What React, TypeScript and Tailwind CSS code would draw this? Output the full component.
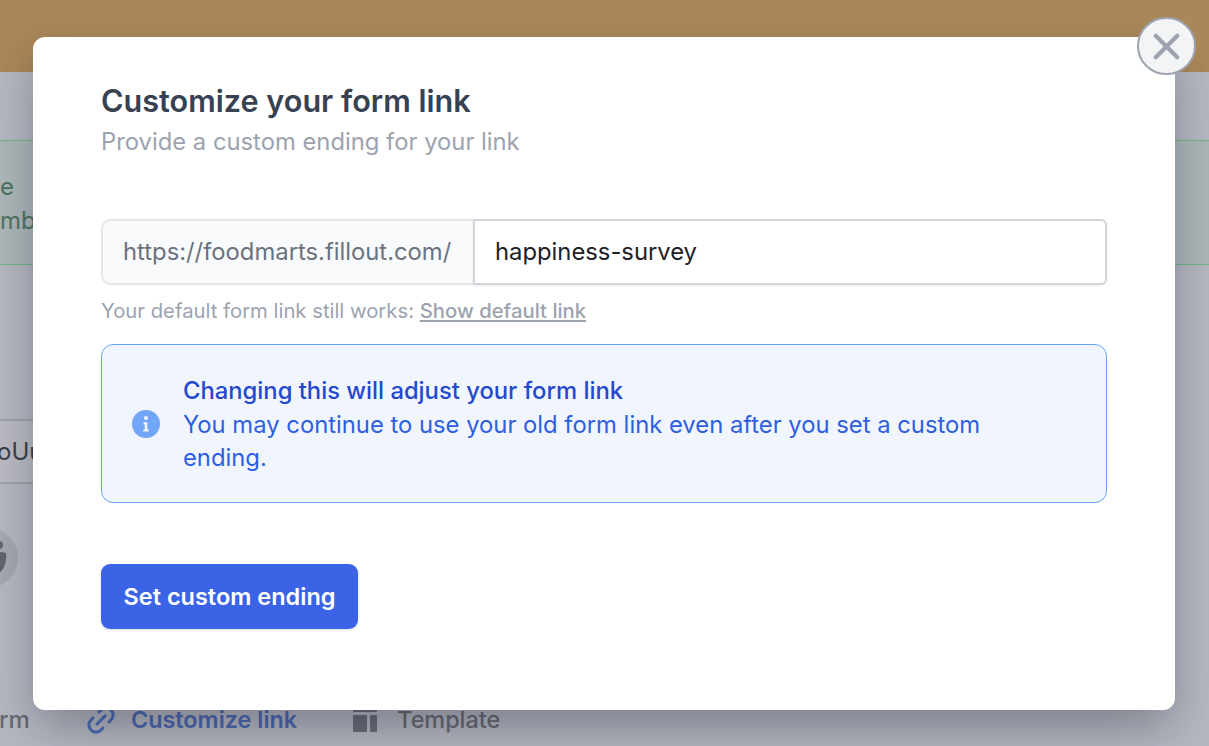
import { Link2, X } from 'lucide-react';

// Page behind the dimmed overlay: only the edges are visible around the modal
function BackgroundPage() {
    return (
        <div className="flex h-full flex-col">
            <div className="h-[72px] shrink-0 bg-[#a98759]" />
            <div className="flex flex-1 flex-col overflow-hidden bg-[#b4b6c0]">
                <div className="mt-[68px] flex h-[125px] shrink-0 flex-col justify-center border-y border-[#6fb586] bg-[#acb6b9] pt-[2px] text-[24px] leading-[34px] text-[#4f7360]">
                    <span>e</span>
                    <span>mb</span>
                </div>
                <div className="mt-[154px] flex h-[65px] w-[40px] shrink-0 items-center border-y-2 border-[#a0a1aa] bg-[#b9bac2] text-[24px] text-[#3d4048]">
                    <span className="-ml-[3px]">oUu</span>
                </div>
                <div className="mt-[44px] -ml-[42px] flex h-[60px] w-[60px] shrink-0 items-center justify-center rounded-full bg-[#a5a7af]">
                    <svg viewBox="0 0 24 24" className="ml-[22px] h-[34px] w-[34px] fill-[#62656d]">
                        <circle cx="12" cy="2.800" r="2.800" />
                        <path d="M7 8.500c3-1 7-1 10 0 .5 5-1 12-5 14-4-2-5.500-9-5-14z" />
                    </svg>
                </div>
                <div className="mt-[114px] flex items-center text-[23.400px] font-medium text-[#676a74]">
                    <span className="-ml-[1px] text-[24px]">rm</span>
                    <Link2 className="ml-[54px] h-[34px] w-[34px] -rotate-45 text-[#4d6db5]" strokeWidth={2.200} />
                    <span className="ml-[13px] font-semibold text-[#4c68b0]">Customize link</span>
                    <svg viewBox="0 0 24 24" className="ml-[56px] h-[24px] w-[24px] fill-[#6a6d77]">
                        <rect x="0" y="0" width="24" height="4" rx="1" />
                        <rect x="0" y="7" width="14" height="17" rx="1" />
                        <rect x="17" y="7" width="7" height="17" rx="1" />
                    </svg>
                    <span className="ml-[20px]">Template</span>
                </div>
            </div>
        </div>
    );
}

export default function App() {
    return (
        <div className="relative h-[746px] w-[1209px] overflow-hidden font-['Inter',sans-serif]">
            <BackgroundPage />

            {/* Modal */}
            <div className="absolute top-[37px] left-[33px] flex h-[673px] w-[1142px] flex-col rounded-[12px] bg-white px-[68px] pt-[45px] shadow-[0_25px_50px_-12px_rgba(20,22,35,0.3),0_12px_36px_rgba(20,22,35,0.1)]">
                <h2 className="text-[30.600px] leading-[38px] font-semibold text-[#374151]">Customize your form link</h2>
                <p className="mt-[5px] text-[23.800px] leading-[34px] text-[#9ca3af]">Provide a custom ending for your link</p>

                <div className="mt-[60px] flex h-[66px] text-[23.800px]">
                    <div className="flex w-[372px] shrink-0 items-center rounded-l-[9px] border-2 border-r-0 border-[#e5e7eb] bg-[#f9fafb] pl-[20px] text-[#6b7280]">
                        https://foodmarts.fillout.com/
                    </div>
                    <div className="flex flex-1 items-center rounded-r-[6px] border-2 border-[#d1d5db] bg-white pl-[20px] text-[#1f2126] shadow-[0_1px_3px_rgba(0,0,0,0.08)]">
                        happiness-survey
                    </div>
                </div>

                <p className="mt-[10px] text-[20.300px] leading-[32px] text-[#9ca3af]">
                    Your default form link still works:{' '}
                    <a className="font-medium underline">Show default link</a>
                </p>

                <div className="mt-[17px] flex h-[159px] items-center rounded-[12px] border border-[#69a1f7] bg-[#f1f6fe] pr-[90px] pl-[30px]">
                    <svg viewBox="0 0 28 28" className="h-[28px] w-[28px] shrink-0">
                        <circle cx="14" cy="14" r="14" fill="#71a6f8" />
                        <circle cx="14" cy="8" r="2.100" fill="#f1f6fe" />
                        <path d="M11.500 12.300h3.800v7.200h1.400v2h-5.400v-2h1.400v-5.200h-1.200z" fill="#f1f6fe" />
                    </svg>
                    <div className="ml-[23px] pt-[2px] text-[23.800px] leading-[33.500px] text-[#2f5fe0]">
                        <div className="font-medium text-[#2449cf]">Changing this will adjust your form link</div>
                        <div>You may continue to use your old form link even after you set a custom ending.</div>
                    </div>
                </div>

                <button className="mt-[61px] h-[65px] w-[257px] rounded-[9px] bg-[#3a63e6] text-[23.500px] font-semibold text-white shadow-[0_1px_3px_rgba(0,0,0,0.15)]">
                    Set custom ending
                </button>
            </div>

            {/* Close button hangs over the modal corner */}
            <button className="absolute top-[17px] left-[1137px] flex h-[58px] w-[59px] items-center justify-center rounded-full border-2 border-[#9ca3af] bg-[#f3f4f6]">
                <X className="h-[43px] w-[43px] text-[#9ca3af]" strokeWidth={2.400} />
            </button>
        </div>
    );
}
